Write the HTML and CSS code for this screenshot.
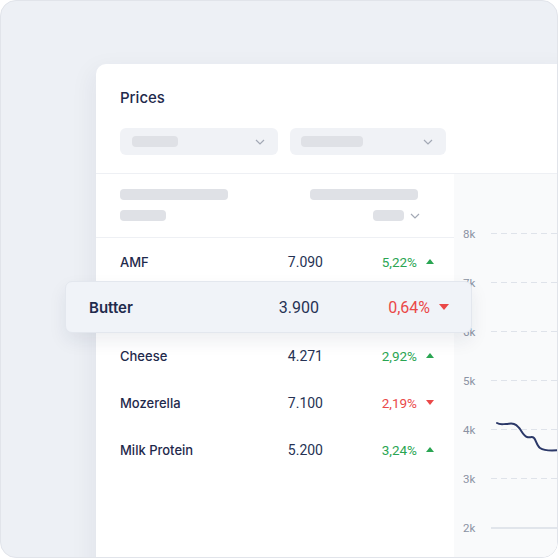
FILE: index.html
```html
<!DOCTYPE html>
<html>
<head>
<meta charset="utf-8">
<link rel="stylesheet" href="styles.css">
</head>
<body>
<div class="frame">
  <div class="card">
    <div class="card-head">
      <div class="title">Prices</div>
      <div class="filters">
        <div class="select sel-a"><span class="ph"></span><svg class="chev" width="10" height="6" viewBox="0 0 10 6"><path d="M1 1l4 4 4-4" fill="none" stroke="#a3a9b5" stroke-width="1.2"/></svg></div>
        <div class="select sel-b"><span class="ph"></span><svg class="chev" width="10" height="6" viewBox="0 0 10 6"><path d="M1 1l4 4 4-4" fill="none" stroke="#a3a9b5" stroke-width="1.2"/></svg></div>
      </div>
    </div>
    <div class="card-body">
      <div class="table">
        <div class="thead">
          <div class="th-left"><span class="bar w108"></span><span class="bar w46"></span></div>
          <div class="th-right"><span class="bar w108"></span><div class="sort"><span class="bar w31"></span><svg width="10" height="6" viewBox="0 0 10 6"><path d="M1 1l4 4 4-4" fill="none" stroke="#a3a9b5" stroke-width="1.2"/></svg></div></div>
        </div>
        <div class="row"><span class="name">AMF</span><span class="val">7.090</span><span class="pct up">5,22%</span><span class="tri up"></span></div>
        <div class="row active">
          <div class="popup"><span class="name">Butter</span><span class="val">3.900</span><span class="pct down">0,64%</span><span class="tri down"></span></div>
        </div>
        <div class="row"><span class="name">Cheese</span><span class="val">4.271</span><span class="pct up">2,92%</span><span class="tri up"></span></div>
        <div class="row"><span class="name">Mozerella</span><span class="val">7.100</span><span class="pct down">2,19%</span><span class="tri down"></span></div>
        <div class="row"><span class="name">Milk Protein</span><span class="val">5.200</span><span class="pct up">3,24%</span><span class="tri up"></span></div>
      </div>
      <div class="chart">
        <div class="grid-row"><span class="lbl">8k</span><span class="gl"></span></div>
        <div class="grid-row"><span class="lbl">7k</span><span class="gl"></span></div>
        <div class="grid-row"><span class="lbl">6k</span><span class="gl"></span></div>
        <div class="grid-row"><span class="lbl">5k</span><span class="gl"></span></div>
        <div class="grid-row"><span class="lbl">4k</span><span class="gl"></span></div>
        <div class="grid-row"><span class="lbl">3k</span><span class="gl"></span></div>
        <div class="grid-row"><span class="lbl">2k</span><span class="gl solid"></span></div>
        <svg class="line" width="110" height="60" viewBox="0 0 110 60">
          <path d="M43 249 C46 251 49 250 52 250 C55 250 57 249 60 250 C63 251 64 253 66 255 C68 258 70 262 73 263 C76 264 78 262 80 264 C82 266 83 272 86 274 C89 276 93 276.5 98 276.5 L112 276" transform="translate(0,-226)" fill="none" stroke="#2b3868" stroke-width="2" stroke-linecap="round" stroke-linejoin="round"/>
        </svg>
      </div>
    </div>
  </div>
</div>
</body>
</html>
```

FILE: styles.css
```css
* { box-sizing: border-box; }
html, body { margin: 0; padding: 0; background: #ffffff; }
body { font-family: "Inter", "Roboto", sans-serif; color: #1f2a4c; }

.frame {
  width: 558px;
  height: 558px;
  border: 1px solid #e1e4ea;
  border-radius: 16px;
  overflow: hidden;
  padding: 63px 0 0 95px;
  background:
    linear-gradient(123deg, rgba(255,255,255,0) 0 72%, rgba(255,255,255,0.35) 72% 100%),
    #edf0f5;
}

.card {
  width: 480px;
  height: 520px;
  background: #ffffff;
  border-top-left-radius: 10px;
  box-shadow: -4px 6px 24px rgba(30, 42, 76, 0.06);
  display: flex;
  flex-direction: column;
}

.card-head {
  padding: 24px 0 18px 24px;
  border-bottom: 1px solid #eef0f4;
}
.title {
  font-size: 15px;
  font-weight: 500;
  line-height: 20px;
  color: #1f2a4c;
}
.filters {
  margin-top: 20px;
  display: flex;
  gap: 12px;
}
.select {
  height: 27px;
  border-radius: 6px;
  background: #f0f2f6;
  display: flex;
  align-items: center;
  justify-content: space-between;
  padding: 0 13px 0 12px;
}
.sel-a { width: 158px; }
.sel-b { width: 156px; padding-left: 11px; }
.ph {
  display: block;
  height: 11px;
  border-radius: 4px;
  background: #dfe1e6;
}
.sel-a .ph { width: 46px; }
.sel-b .ph { width: 62px; }
.chev { display: block; }

.card-body {
  flex: 1;
  display: flex;
}
.table {
  width: 358px;
  flex: none;
}
.thead {
  height: 64px;
  border-bottom: 1px solid #eef0f4;
  padding: 15px 36px 0 24px;
  display: flex;
  justify-content: space-between;
}
.th-left, .th-right {
  display: flex;
  flex-direction: column;
  gap: 10px;
}
.th-right { align-items: flex-end; }
.bar {
  display: block;
  height: 11px;
  border-radius: 4px;
  background: #dfe1e6;
}
.w108 { width: 108px; }
.w46 { width: 46px; }
.w31 { width: 31px; }
.sort {
  display: flex;
  align-items: center;
  gap: 6px;
  margin-right: -2px;
}
.sort svg { display: block; }

.row {
  position: relative;
  height: 47px;
  display: flex;
  align-items: center;
  padding: 0 20px 0 24px;
}
.name {
  flex: 1;
  font-size: 13px;
  font-weight: 500;
  color: #1f2a4c;
}
.val {
  width: 100px;
  text-align: right;
  font-family: "Roboto", sans-serif;
  font-size: 14px;
  color: #263254;
}
.pct {
  width: 94px;
  text-align: right;
  font-family: "Roboto", sans-serif;
  font-size: 13.5px;
}
.pct.up { color: #2aa552; }
.pct.down { color: #ea4848; }
.tri {
  width: 0;
  height: 0;
  margin-left: 9px;
  border-left: 4.5px solid transparent;
  border-right: 4.5px solid transparent;
}
.tri.up { border-bottom: 5px solid #2aa552; }
.tri.down { border-top: 5px solid #ea4848; }

.popup {
  position: absolute;
  left: -31px;
  top: -4px;
  width: 407px;
  height: 52px;
  z-index: 2;
  background: #f0f3f8;
  border: 1px solid #e3e7ee;
  border-radius: 7px;
  box-shadow: 0 8px 18px rgba(30, 42, 76, 0.08);
  display: flex;
  align-items: center;
  padding: 0 22px 0 23px;
}
.popup .name {
  font-size: 15px;
  font-weight: 600;
}
.popup .val {
  width: 104px;
  font-size: 16px;
}
.popup .pct {
  width: 111px;
  font-size: 16px;
}
.popup .tri {
  margin-left: 9px;
  border-left-width: 5.5px;
  border-right-width: 5.5px;
  border-top-width: 6px;
}

.chart {
  position: relative;
  flex: 1;
  background-color: #f9fafb;
  background-image: radial-gradient(#f1f3f5 0.5px, transparent 0.7px);
  background-size: 6px 6px;
  padding: 35px 0 0 9px;
}
.grid-row {
  height: 49px;
  display: flex;
  align-items: center;
}
.lbl {
  width: 28px;
  font-family: "Roboto", sans-serif;
  font-size: 11.5px;
  color: #8b92a3;
}
.gl {
  flex: 1;
  height: 1px;
  background: repeating-linear-gradient(to right, #dfe3ea 0 6px, transparent 6px 10px);
}
.gl.solid {
  height: 2px;
  background: #e1e5eb;
}
.line {
  position: absolute;
  left: 0;
  top: 226px;
}
```
